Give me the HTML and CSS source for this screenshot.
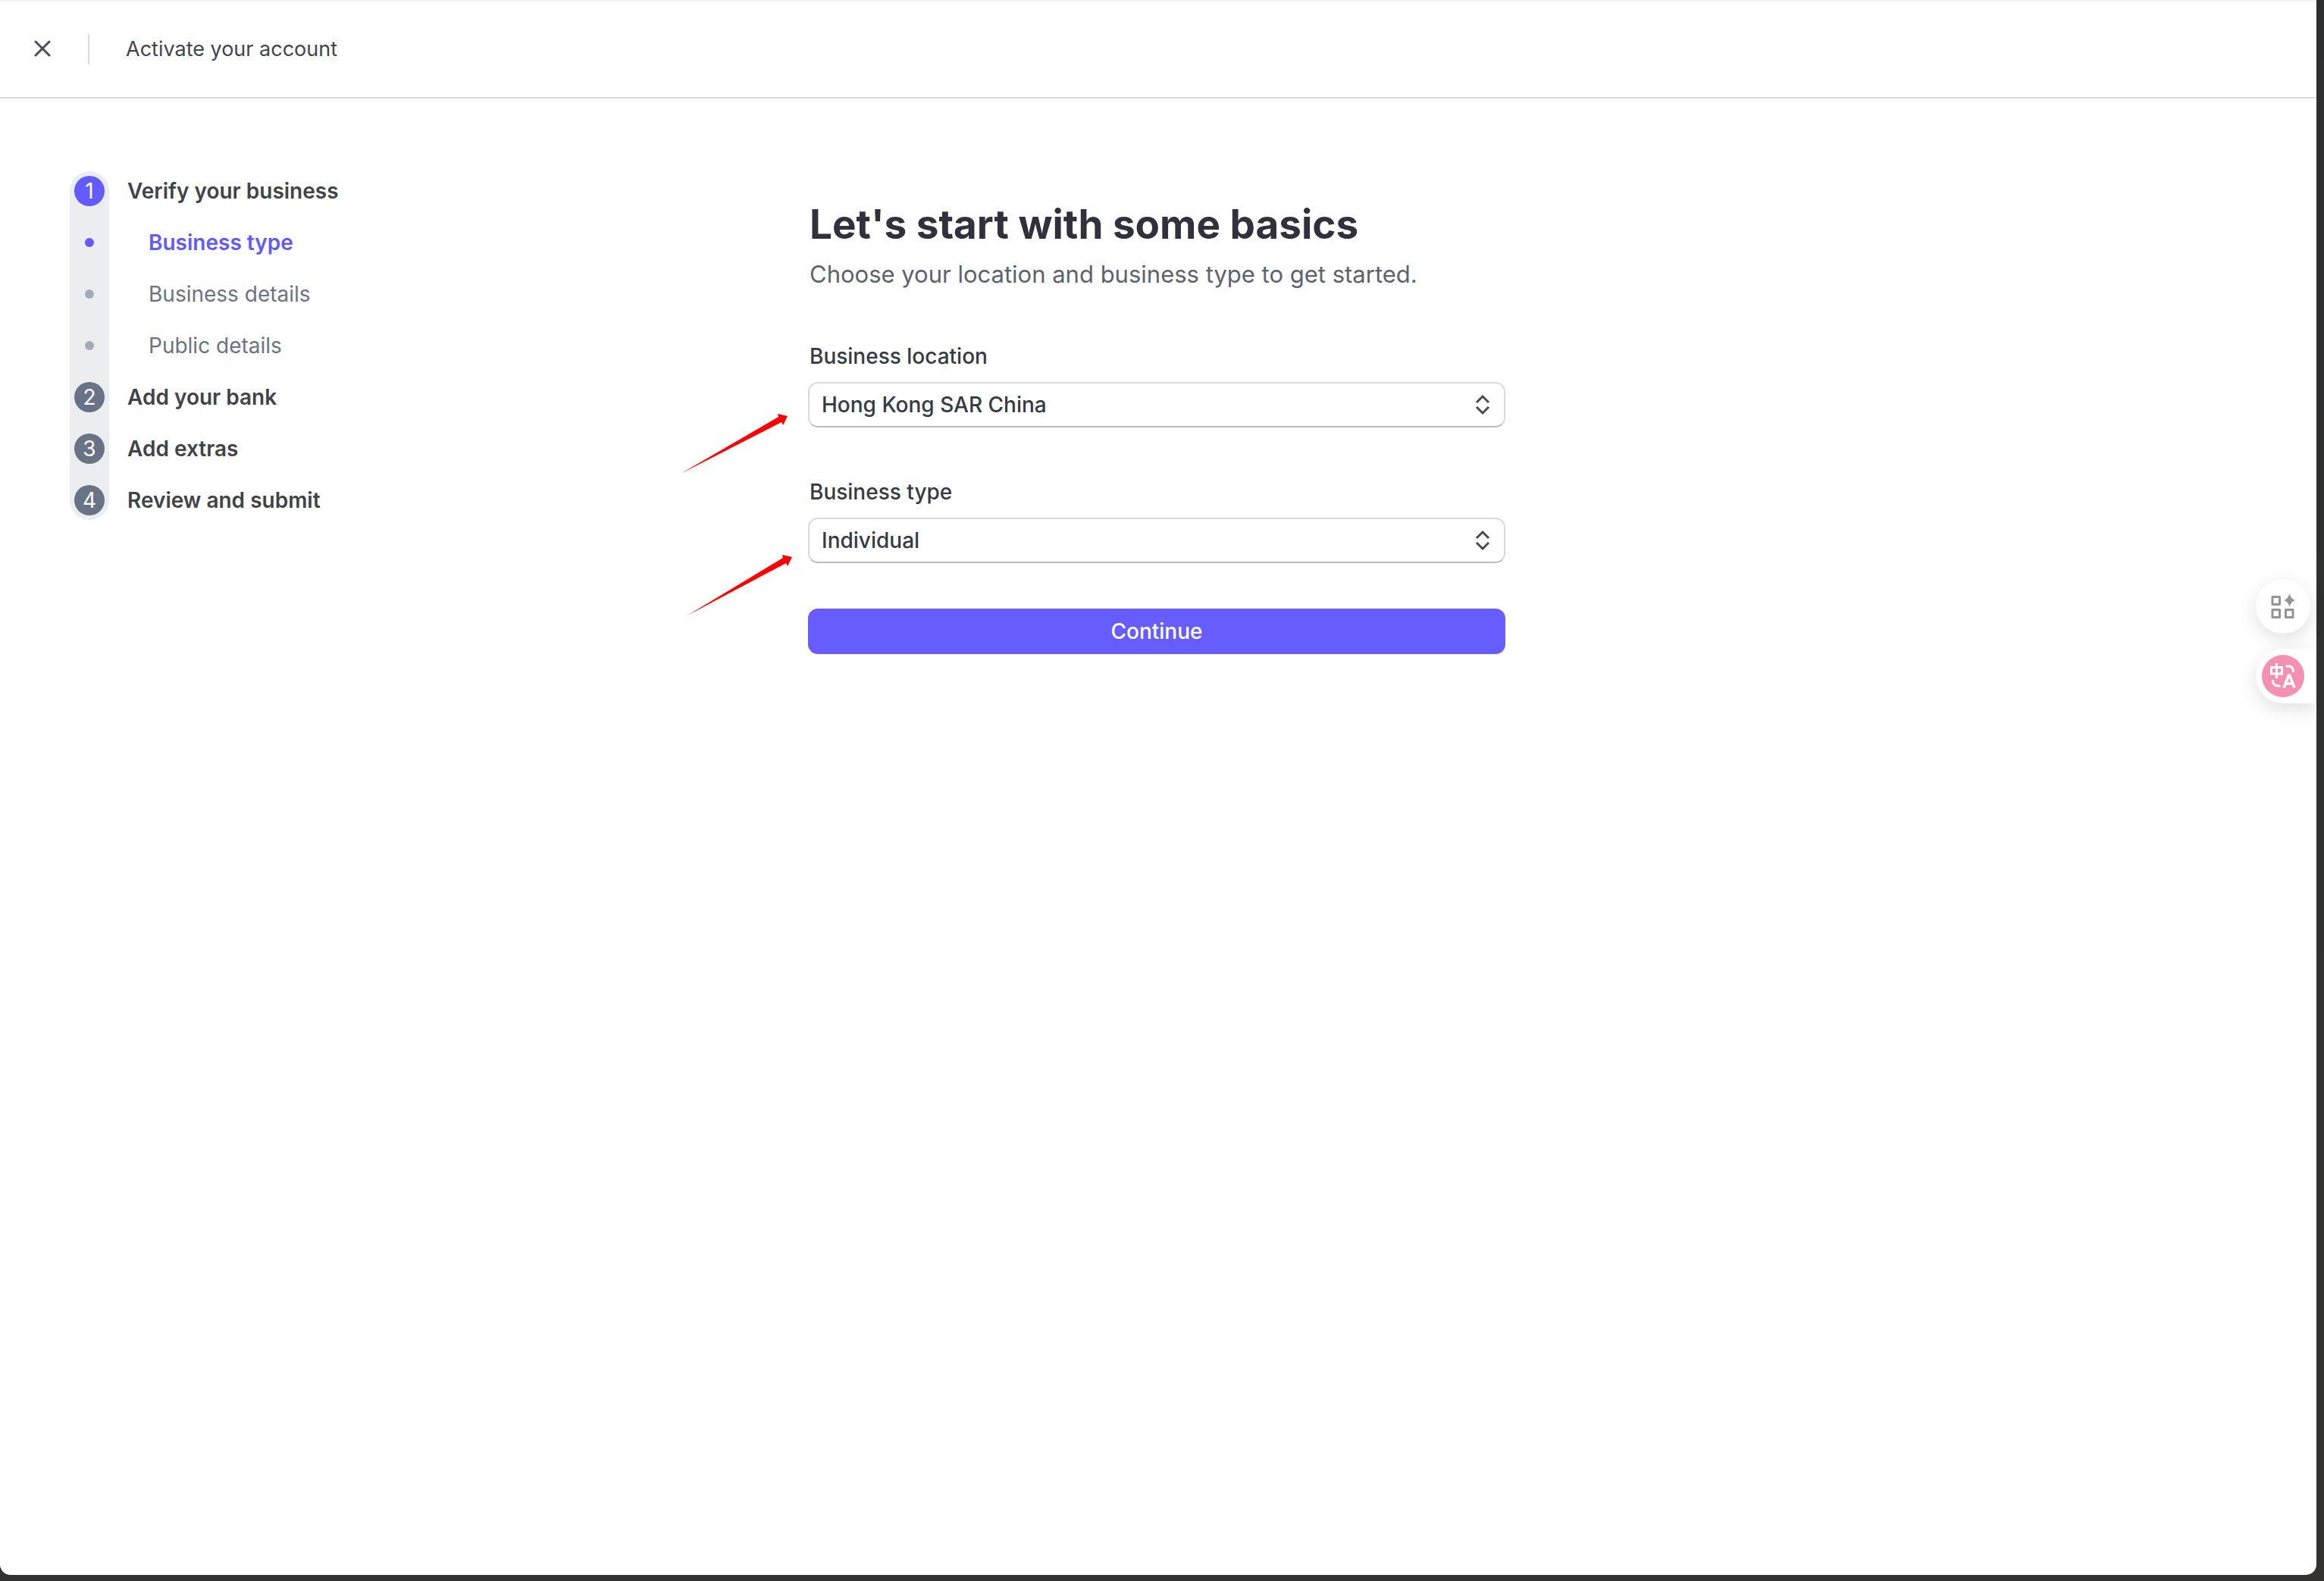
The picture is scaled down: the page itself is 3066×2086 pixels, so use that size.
FILE: index.html
```html
<!DOCTYPE html>
<html lang="en">
<head>
<meta charset="utf-8">
<title>Activate your account</title>
<link rel="stylesheet" href="styles.css">
</head>
<body>
<div class="window">
  <header class="topbar">
    <button class="close" type="button" aria-label="Close">
      <svg width="24" height="24" viewBox="0 0 24 24"><path d="M3 2 21 20M21 2 3 20"/></svg>
    </button>
    <span class="divider"></span>
    <span class="topbar-title">Activate your account</span>
  </header>

  <div class="layout">
    <nav class="steps" aria-label="Steps">
      <ol class="step-list">
        <li class="step step-current"><span class="marker">1</span><a class="step-link" href="#verify">Verify your business</a></li>
        <li class="substep substep-current"><span class="dot"></span><a class="step-link" href="#type">Business type</a></li>
        <li class="substep"><span class="dot"></span><a class="step-link" href="#details">Business details</a></li>
        <li class="substep"><span class="dot"></span><a class="step-link" href="#public">Public details</a></li>
        <li class="step"><span class="marker">2</span><a class="step-link" href="#bank">Add your bank</a></li>
        <li class="step"><span class="marker">3</span><a class="step-link" href="#extras">Add extras</a></li>
        <li class="step"><span class="marker">4</span><a class="step-link" href="#review">Review and submit</a></li>
      </ol>
    </nav>

    <main class="content">
      <h1 class="title">Let's start with some basics</h1>
      <p class="subtitle">Choose your location and business type to get started.</p>
      <form class="form">
        <div class="fields">
          <div class="field">
            <label class="label" for="location">Business location</label>
            <div class="select-wrap">
              <select class="select" id="location"><option>Hong Kong SAR China</option></select>
              <svg class="chevrons" width="20" height="28" viewBox="0 0 20 28"><path d="M2 11 10 3 18 11M2 17 10 25 18 17"/></svg>
              <svg class="arrow arrow-location" width="144" height="82" viewBox="-4 0 144 82"><path d="M-2 80 127 5 126 1 139 4 133 16 131 12Z"/></svg>
            </div>
          </div>
          <div class="field">
            <label class="label" for="business-type">Business type</label>
            <div class="select-wrap">
              <select class="select" id="business-type"><option>Individual</option></select>
              <svg class="chevrons" width="20" height="28" viewBox="0 0 20 28"><path d="M2 11 10 3 18 11M2 17 10 25 18 17"/></svg>
              <svg class="arrow arrow-type" width="144" height="82" viewBox="-4 0 144 82"><path d="M1 81 127 5 126 1 139 4 133 16 131 12Z"/></svg>
            </div>
          </div>
        </div>
        <button class="submit" type="button">Continue</button>
      </form>
    </main>
  </div>

  <aside class="floating">
    <button class="tool tool-apps" type="button" aria-label="Apps">
      <svg width="36" height="36" viewBox="0 0 36 36">
        <g fill="none" stroke="#949494" stroke-width="3" stroke-linejoin="round"><path d="M4 5.500h9.500v10H4zM4 22.500h9.500v10H4zM21.500 22.500H31v10h-9.500z"/></g>
        <path fill="#949494" d="M26.500 1Q28 8 34 10 28 12 26.500 19 25 12 19 10 25 8 26.500 1Z"/>
      </svg>
    </button>
    <button class="tool tool-translate" type="button" aria-label="Translate">
      <svg width="56" height="56" viewBox="0 0 56 56">
        <circle cx="28" cy="28" r="28" fill="#f491b2"/>
        <g fill="none" stroke="#fff" stroke-width="3">
          <path d="M12.500 16.500h14v8.500h-14zM19.500 11v20"/>
          <path d="M31.500 15h4q6 0 6 8M14.500 33q0 8 7 8h3"/>
          <path stroke-width="3.500" stroke-linejoin="round" d="M29 43.500 35.500 27h1L43 43.500M31.500 38h9"/>
        </g>
      </svg>
    </button>
  </aside>
</div>
</body>
</html>
```
FILE: styles.css
```css
* {
  box-sizing: border-box;
}

body {
  margin: 0;
  min-height: 100vh;
  padding: 0 10px 8px 0;
  display: flex;
  background: linear-gradient(#2b2f2f, #333231);
  font-family: Inter, "Noto Sans", sans-serif;
  font-size: 28px;
  line-height: 40px;
  color: #414552;
}

button {
  border: 0;
  padding: 0;
  font: inherit;
  cursor: pointer;
}

.window {
  position: relative;
  flex: 1;
  background: #fff;
  border-top: 2px solid #f1f1f1;
  border-radius: 0 0 14px 14px;
}

.topbar {
  display: flex;
  align-items: center;
  height: 128px;
  padding-left: 44px;
  border-bottom: 2px solid #d8dbdf;
}

.close {
  display: flex;
  background: none;
}

.close path {
  fill: none;
  stroke: #4d4b5e;
  stroke-width: 3;
  stroke-linecap: round;
}

.divider {
  width: 2px;
  height: 40px;
  margin: 0 48px;
  background: #d8dbdf;
}

.topbar-title {
  font-size: 27px;
  color: #42454c;
}

.layout {
  display: grid;
  grid-template-columns: 1fr 920px 1fr;
  align-items: start;
  padding: 96px 96px 96px 92px;
}

/* The list is as wide as its grey track; the labels run out to its right. */
.step-list {
  width: 52px;
  margin: 0;
  padding: 6px;
  list-style: none;
  display: flex;
  flex-direction: column;
  gap: 28px;
  background: #ebedf1;
  border-radius: 26px;
  white-space: nowrap;
}

.step,
.substep {
  display: flex;
  align-items: center;
  height: 40px;
}

.step {
  gap: 30px;
  font-weight: 600;
}

.substep {
  gap: 72px;
  padding-left: 14px;
}

.marker {
  flex: none;
  width: 40px;
  height: 40px;
  border-radius: 50%;
  background: #687385;
  color: #fff;
  font-weight: 400;
  text-align: center;
}

.step-current .marker {
  background: #635bff;
}

.step-link {
  color: #414349;
  text-decoration: none;
}

.substep .step-link {
  color: #6a7383;
}

.dot {
  flex: none;
  width: 12px;
  height: 12px;
  border-radius: 50%;
  background: #a5abb5;
}

.substep-current .dot {
  background: #635bff;
}

.substep-current .step-link {
  color: #625afa;
  font-weight: 600;
}

.content {
  padding-top: 38px;
}

.title {
  margin: 0;
  padding-left: 2px;
  font-size: 53px;
  line-height: 64px;
  font-weight: 700;
  color: #30313d;
}

.subtitle {
  margin: 10px 0 0;
  padding-left: 2px;
  font-size: 31px;
  line-height: 48px;
  color: #5d6270;
}

.form {
  display: flex;
  flex-direction: column;
  gap: 60px;
  margin-top: 64px;
}

.fields {
  display: flex;
  flex-direction: column;
  gap: 65px;
}

.field {
  display: flex;
  flex-direction: column;
  gap: 14px;
}

.label {
  padding-left: 2px;
  font-weight: 500;
  color: #353a44;
}

.select-wrap {
  position: relative;
  display: flex;
}

.select {
  flex: 1;
  height: 60px;
  padding: 0 60px 0 16px;
  appearance: none;
  border: 2px solid #d8dadd;
  border-bottom-color: #bdbdbf;
  border-radius: 13px;
  background: #fff;
  font: inherit;
  font-weight: 500;
  color: #353a44;
}

.chevrons {
  position: absolute;
  top: 16px;
  right: 20px;
  pointer-events: none;
}

.chevrons path {
  fill: none;
  stroke: #474a52;
  stroke-width: 3;
}

.arrow {
  position: absolute;
  fill: #f00;
}

.arrow-location {
  top: 41px;
  right: calc(100% + 26px);
}

.arrow-type {
  top: 48px;
  right: calc(100% + 20px);
}

.submit {
  height: 60px;
  border-radius: 13px;
  background: #675dff;
  color: #fff;
  font-weight: 500;
}

.floating {
  position: absolute;
  top: 762px;
  right: 0;
  display: flex;
  flex-direction: column;
  align-items: flex-end;
  gap: 20px;
}

.tool {
  display: flex;
  align-items: center;
  height: 72px;
  background: #fff;
  box-shadow: 0 8px 24px rgba(0, 0, 0, 0.12);
}

.tool-apps {
  width: 72px;
  margin-right: 8px;
  justify-content: center;
  border-radius: 50%;
}

.tool-translate {
  width: 80px;
  padding-left: 8px;
  border-radius: 36px 0 0 36px;
  clip-path: inset(-40px 0 -40px -40px);
}
```
